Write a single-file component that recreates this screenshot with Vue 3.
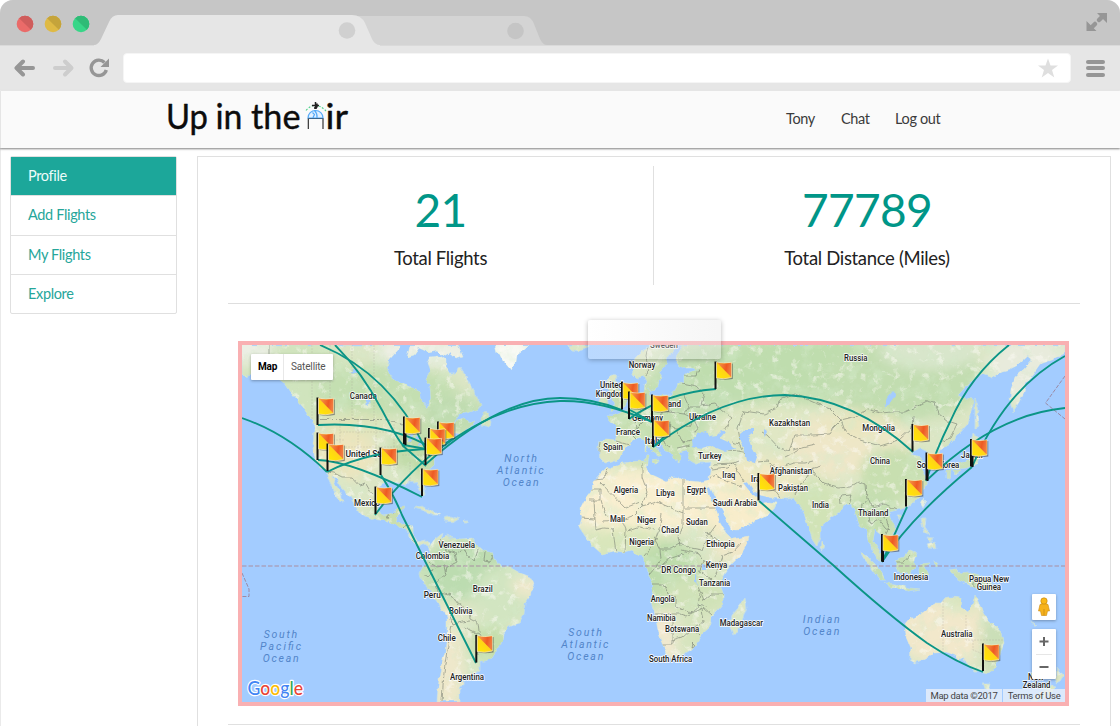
<script setup>
const tabs = [
  { d: 'M358 16H524Q531 16 534 24L540 39Q543 45 547 45H358Z', fill: '#d4d4d4', cx: 515.5, cy: 31 },
  { d: 'M94 45Q98 45 101 39L109 22Q112 15 118 15H352Q361 15 365 23L372 39Q375 45 380 45V46H94Z', fill: '#e6e6e6', cx: 347, cy: 30.5 }
]
const lights = [
  { x: 25, a: '#ea6b69', b: '#cf5d5c' },
  { x: 53, a: '#dfba45', b: '#c5a43b' },
  { x: 81, a: '#38d688', b: '#2fbb76' }
]
const nav = ['Tony', 'Chat', 'Log out']
const menu = ['Profile', 'Add Flights', 'My Flights', 'Explore']
const stats = [
  { value: '21', label: 'Total Flights' },
  { value: '77789', label: 'Total Distance (Miles)' }
]

const land = [
  // North and Central America
  '242,345 242,374 247,379 252,372 259,377 268,372 276,377 284,383 290,392 297,400 303,407 308,415 314,421 314,432 313,448 315,459 320,467 326,471 329,480 333,489 338,499 344,503 341,494 336,485 332,476 337,479 342,488 350,497 356,507 361,514 373,519 386,521 396,525 402,529 407,530 409,538 415,544 420,547 425,544 429,547 430,543 425,540 417,542 413,536 413,526 403,524 396,521 398,514 404,507 397,508 393,514 385,516 379,512 375,503 375,494 379,487 386,482 398,483 404,485 409,481 415,482 419,487 422,496 425,495 424,485 421,477 427,471 434,465 434,457 437,450 442,443 450,438 447,432 452,429 455,433 461,434 471,427 476,421 469,423 464,418 458,420 451,426 460,414 470,412 478,409 482,405 478,398 474,392 468,381 464,372 459,366 455,374 449,374 446,367 446,360 440,356 430,357 427,363 430,371 426,379 430,386 431,398 427,408 422,402 420,392 410,387 400,383 391,377 387,368 389,360 397,351 402,345',
  '410,345 458,345 463,357 456,359 449,353 444,356 437,350 428,352 419,348 414,355 407,357',
  // Newfoundland and the Caribbean
  '481,418 486,411 491,421 490,428 482,426', '413,508 421,506 431,510 440,515 432,515 422,510', '444,518 451,516 459,519 454,522 445,521', '464,520 468,520 468,522 464,522',
  // Greenland and Iceland
  '495,345 497,353 501,355 505,363 511,370 516,362 517,355 524,350 530,345', '567,345 572,350 580,351 588,347 589,345',
  // South America
  '429,547 434,540 439,536 443,533 441,540 446,535 452,538 461,539 472,538 477,545 484,551 492,553 496,563 503,567 511,568 520,573 531,577 535,584 530,595 525,602 524,614 519,623 509,627 503,634 502,641 498,648 492,658 485,661 480,661 480,671 473,675 463,677 463,684 459,689 459,701 437,701 438,688 441,666 445,652 447,634 447,616 440,607 433,597 427,586 421,581 419,574 423,567 428,561 429,552',
  // Great Britain and Ireland
  '606,380 611,375 617,376 616,383 619,389 624,397 627,402 624,408 616,409 610,412 614,405 612,399 613,394 608,391 609,385', '599,400 602,395 607,396 608,403 603,407 598,405',
  // Europe, Asia and Africa
  '650,345 642,351 635,358 632,366 633,375 637,379 643,376 647,383 650,391 656,390 658,382 663,378 659,372 666,364 668,356 674,350 677,345 683,345 678,354 677,363 683,368 693,368 699,370 689,372 684,376 684,383 678,382 676,390 670,395 663,395 656,397 650,395 648,387 650,383 645,384 644,394 639,398 632,403 627,410 621,413 613,416 607,416 611,421 616,424 619,432 616,441 606,440 599,441 598,449 600,458 605,463 612,462 620,459 623,452 628,445 634,440 641,438 645,440 650,448 656,452 658,458 662,455 657,449 650,441 652,437 659,442 665,449 672,453 675,460 679,463 681,457 680,452 687,450 690,453 688,459 694,463 703,463 711,462 710,470 709,480 700,482 690,481 683,480 678,477 671,477 667,482 657,477 650,474 647,469 648,461 640,461 623,463 612,468 607,467 600,474 593,482 592,491 584,501 580,509 582,518 579,527 585,536 593,546 602,554 613,551 625,552 632,550 638,555 645,557 645,566 648,574 653,583 653,593 651,603 655,615 658,630 662,643 666,654 672,658 684,655 692,650 698,640 702,634 710,627 710,618 717,611 723,604 723,593 720,585 723,576 729,567 740,556 747,544 749,536 740,538 732,539 726,533 720,524 717,512 711,499 707,488 710,487 715,497 723,511 731,529 737,530 750,524 762,518 773,511 777,503 769,502 763,503 757,498 750,492 743,483 748,482 754,491 760,495 773,498 787,499 794,498 800,505 804,513 808,526 812,538 817,546 820,537 820,527 829,519 839,512 844,505 851,504 856,514 860,525 866,529 868,540 872,549 878,560 882,562 882,554 877,547 873,540 875,529 880,533 885,540 894,534 895,526 890,519 889,512 897,510 908,507 918,498 924,490 927,481 923,472 919,464 924,460 918,456 912,455 914,451 920,448 926,451 929,458 931,467 937,468 941,462 938,455 940,450 950,443 959,434 968,424 973,409 973,399 962,398 958,395 969,383 983,373 993,377 1002,371 1010,369 1018,365 1028,356 1031,361 1024,369 1016,376 1011,389 1010,401 1013,412 1019,402 1024,392 1026,383 1033,374 1040,364 1052,360 1065,353 1065,345',
  // Madagascar, Sri Lanka, Mediterranean islands
  '745,598 747,607 743,618 738,631 733,634 730,627 732,614 739,606', '821,542 825,546 823,550 820,548', '645,446 647,446 647,451 645,452', '646,455 649,455 648,461 645,460', '652,461 658,460 656,464',
  // Japan, Sakhalin, Taiwan, Philippines
  '973,433 980,439 976,443 971,441', '974,446 980,454 977,464 966,468 955,469 961,463 970,459', '946,471 951,470 950,479 946,478', '952,470 960,470 956,475', '975,397 979,410 977,415 979,426 975,429 975,414', '923,499 926,502 923,508 921,504', '897,515 901,515 899,519', '921,518 926,518 925,528 930,535 924,532', '927,544 935,541 936,549 929,548', '927,537 933,538 930,542',
  // Indonesia and New Guinea
  '860,552 867,556 873,562 881,571 886,580 880,580 873,571 866,562', '885,583 896,584 909,588 921,589 908,591 890,587', '895,561 903,558 910,550 917,553 914,560 915,566 910,573 900,573', '920,564 930,563 924,567 928,575 923,575 920,579 919,570', '934,560 938,564 935,568', '949,570 957,569 961,573 969,572 982,576 990,581 998,592 988,588 981,590 973,587 964,582 957,578',
  // Australia, Tasmania, New Zealand
  '905,625 910,619 921,614 929,608 934,603 941,603 945,598 950,597 961,598 960,607 968,612 972,606 975,595 980,606 986,617 995,626 1002,633 1004,643 1000,655 995,668 988,673 979,671 974,671 968,664 963,661 965,657 959,661 956,655 947,652 934,653 924,659 915,663 910,660 911,648 906,636', '983,683 991,683 989,690 985,690', '1056,667 1060,672 1064,675 1060,681 1055,684 1057,677', '1051,685 1056,687 1047,696 1038,701 1031,701', '1031,621 1037,626 1034,626'
]
const lakes = [
  '692,440 698,433 706,431 710,437 716,436 722,430 725,432 720,438 729,442 735,449 724,451 712,446 701,449 693,447',
  '740,434 746,429 753,429 753,434 748,438 752,448 757,457 755,463 747,461 745,451 740,442',
  '402,431 409,428 415,431 406,433', '409,434 413,435 411,442 408,443', '415,435 421,438 417,440', '418,444 424,441 424,444 419,446',
  '365,397 371,402 367,405', '349,372 358,368 357,373', '883,409 887,398 894,390 895,396 888,405', '702,565 707,566 706,570 702,570', '764,430 767,432 764,437', '695,572 697,580 698,586 695,581'
]
const tints = [
  // x, y, rx, ry, colour
  [300, 390, 60, 48, '#d0e4bd'], [385, 390, 70, 26, '#c4dfb1'], [455, 415, 32, 22, '#c0dcb0'], [350, 425, 40, 12, '#e0e4b9'],
  [424, 450, 34, 26, '#c1dba9'], [345, 455, 32, 24, '#ece5be'], [395, 515, 22, 18, '#cadead'], [425, 352, 50, 14, '#eef0e6'], [248, 348, 26, 14, '#ecefe5'],
  [510, 357, 25, 20, '#f8faf5'], [465, 570, 45, 30, '#bcdcb0'], [505, 595, 30, 30, '#d2e5c1'], [525, 585, 12, 12, '#f1e8cc'], [448, 665, 14, 60, '#efe8cb'], [490, 645, 20, 20, '#c4deab'],
  [650, 430, 55, 50, '#c6dfb1'], [720, 385, 70, 45, '#c2deb3'], [620, 450, 24, 14, '#e0e6c0'], [800, 370, 110, 34, '#bfddae'], [905, 380, 80, 40, '#c2ddb0'], [930, 352, 50, 18, '#d8e6cb'], [1030, 370, 44, 35, '#e8ebdc'],
  [770, 425, 60, 22, '#e0e7c4'], [850, 445, 62, 34, '#efe7c8'], [860, 425, 40, 12, '#eae6c0'], [895, 475, 36, 28, '#c8dfb0'],
  [640, 500, 90, 32, '#f9efd0'], [735, 500, 38, 38, '#f8edcb'], [765, 477, 38, 20, '#f0e8c2'], [815, 510, 26, 32, '#d1e3b6'], [870, 520, 28, 30, '#c4deb0'],
  [625, 545, 46, 18, '#d9e6bb'], [668, 575, 34, 34, '#bedcac'], [735, 545, 22, 16, '#f2e8c9'], [695, 595, 35, 20, '#d0e2b7'], [663, 635, 16, 26, '#f3e9d0'], [693, 635, 16, 18, '#d5e4bd'],
  [945, 632, 48, 32, '#f2e8cb'], [995, 640, 15, 38, '#cbdfb8'], [963, 600, 18, 12, '#dbe6c0'], [905, 573, 38, 20, '#c3deb1'], [975, 580, 30, 14, '#c6deb5'], [960, 462, 22, 22, '#c8dfb9']
]
const borders = [
  'M320 419.5H384Q396 421 403 425L411 432M420 444L430 438 437 437 443 428 446 435',
  'M327 472L334 473 342 477 352 477 360 486 366 484 372 494 377 497',
  'M387 519L389 513 394 513M397 521L403 519M402 528L410 525M412 540L417 543',
  'M269 345V370L278 378 288 394',
  'M441 540L446 550 455 553 457 562 447 567 446 573M429 563L436 567 444 566 446 575 436 583 438 592 447 595 450 593 458 604 469 610 470 619 478 623 479 632M457 552L465 550 467 556 475 560 478 549M485 552L484 561 490 562 493 556M449 613L453 625 461 622 470 621M452 626L447 650 444 672 442 701M465 627L479 634 483 641 477 648 478 655M424 576L430 575 433 568',
  'M600 442L598 458M616 441L629 445M624 411L635 419 636 428 632 435 637 440M642 397L641 411 636 418M660 396L663 411 658 418 644 420M643 422L634 431M663 411L684 414 689 407 684 396M684 414L693 418 689 426 676 429 666 424 657 427M677 429L682 442 692 440M660 428L664 444 670 448M693 418L698 428 695 433M682 383L697 386 704 394 701 406 715 404 732 418 724 430M689 407L701 407M684 376L697 376 699 370M648 345L646 356 649 365 645 376M676 448L690 445',
  'M728 450L739 451 748 453M739 461L734 463 713 464M732 442L739 444 742 450M734 463L739 474 744 482M711 469L719 468 728 467 732 463M710 478L716 475 723 480 735 484 742 486M740 440L738 428 744 411 764 414 777 408 779 400 795 394 815 403 830 409 841 420 833 428 829 434 812 435 795 435 789 451 779 448 767 435 762 432M757 462L768 461 779 468 793 463 805 463 813 461M770 464L773 475 771 481 773 489 780 498M795 494L800 484 807 478 811 469 821 466M841 420L857 416 867 409 880 413 892 412 905 412 916 407 921 404 927 401 935 403 939 414 948 421 957 424 950 438 941 442M841 420L845 431 860 440 880 446 899 440 912 428 913 416M811 469L817 477 824 484 838 488 850 487 858 482 866 484 867 499 862 505 859 515M841 503L840 496 852 495 849 505M868 498L872 507 885 504 897 510M868 510L870 523 879 519 885 527 890 531M872 508L886 519 889 528 884 538M793 450L806 447 815 445M785 457L799 450',
  'M608 468L604 479 593 480M592 489H600V500H589M600 482L625 508 640 502M601 500L606 517M581 518L595 519 594 500M642 463V477L647 491 642 506 657 502 683 513V480M684 508H716M683 513V528L678 536 680 547M662 514L659 529 655 540 660 549 671 549 681 543 691 548 702 550 706 539 716 525M642 506L632 516 622 520 603 521M595 519L596 530 604 528 613 529 616 553M622 520L626 530 625 552M628 531L640 527 655 530M657 538L650 549 644 556M660 549L661 559 654 569 649 575M681 550L699 554 704 561 702 566 699 573M704 561L719 564 722 556 733 552 742 542M718 540L705 533M719 564L715 577M702 573L719 586M650 584H664L668 594 676 597V606L691 613 700 605M698 587L704 600 711 594 723 594M700 593L698 605 707 607M655 614H680L686 616M672 617V630 645H661M672 640L682 637 692 628 700 635M686 616L702 608 704 622 693 629M691 648L695 646 692 643ZM703 608L711 615M657 569L669 559 683 554',
  'M895 562L904 562 910 555M974 575V589'
]
const stateLines = ['M943 600V672M966 615V640H1004M973 640V650L998 660', 'M340 420V455M358 420V470M376 420V462M394 424V470M318 440H345M340 432H400M345 447H420M402 455H430M410 462V482M290 395L300 419M312 345V419M330 345V419M352 345V419M374 345V419']
const dashes = ['M242 573L249 589V596.5H242', 'M1065 376L1045.500 403L1065 419']
const routes = [
  'M242 418Q288 434 327 472', 'M320 345Q390 374 425 448', 'M335 345Q362 372 382 410T404 445L426 449', 'M318 425Q390 421 437 451',
  'M318 460Q352 461 422 497', 'M327 472Q372 449 438 449', 'M402 445L426 466', 'M375 515Q408 470 453 438', 'M381 475Q394 495 402 515L476 663',
  'M426 464Q500 398 560 398Q592 398 622 410', 'M438 450Q500 403 560 401Q602 400 652 422', 'M629 419Q665 393 716 389', 'M630 410L652 422',
  'M653 447Q722 395 785 395Q854 398 913 452', 'M653 447L665 436', 'M759 501L833 565Q888 615 927 643Q957 663 983 672',
  'M907 507L882 562Q910 518 972 467', 'M926 481Q936 450 950 422Q970 376 1009 345', 'M927 480Q994 415 1065 408', 'M972 467Q1006 388 1065 356'
]
const flags = [
  [317.5, 397.5], [317.5, 432.5], [327.5, 443.5], [404, 416.5], [438, 421.5], [429, 428], [425.5, 437.5], [380.500, 447.5], [422, 468.5], [375.5, 486.500],
  [622, 382], [629, 391.500], [652, 394.500], [653, 419.5], [715.5, 361.5], [758.500, 473], [912.500, 424], [926.500, 452.500], [971, 439], [906, 479], [882, 534], [983, 643.5], [476.300, 635]
]
const twinPoles = [[405.500, 419], [439.500, 423], [927.500, 455], [972.500, 441], [883, 536]]
const labels = [
  ['Canada', 349.7, 398.5, 27], ['United States', 345.5, 456.5, 51], ['Mexico', 354, 505.5, 26], ['Venezuela', 438.5, 548, 36.500], ['Colombia', 415.7, 559, 33.500], ['Peru', 423.7, 598, 17],
  ['Bolivia', 449, 613.5, 23.500], ['Brazil', 472.7, 591.500, 20], ['Chile', 437.7, 641, 18], ['Argentina', 450, 679.500, 34], ['Norway', 628.7, 368, 26.600], ['Sweden', 650, 348, 28],
  ['Russia', 844, 361, 23.400], ['United', 600, 388, 23], ['Kingdom', 595.7, 396.5, 30], ['Germany', 632, 420.5, 31], ['Poland', 656, 406.5, 25], ['Ukraine', 689, 420, 27],
  ['Kazakhstan', 769, 425.500, 41], ['Mongolia', 862.3, 431, 32.700], ['China', 870, 464, 20], ['France', 616, 434.500, 24], ['Spain', 603.3, 449.6, 19.500], ['Italy', 644.7, 444, 17],
  ['Turkey', 698, 459, 23.700], ['Iraq', 722.3, 478, 13], ['Iran', 750.7, 482, 15], ['Afghanistan', 769.7, 474, 42.300], ['Pakistan', 778, 490.5, 30], ['India', 812, 508, 17],
  ['Saudi Arabia', 712.7, 506, 44.300], ['Egypt', 686.7, 492.500, 19.400], ['Libya', 656, 496.300, 18.700], ['Algeria', 613.7, 493, 24.400], ['Mali', 610, 522, 15], ['Niger', 637, 522.500, 19],
  ['Chad', 661.3, 532.500, 17.700], ['Sudan', 686, 524.500, 21.700], ['Nigeria', 629.3, 544.500, 24.700], ['Ethiopia', 706.3, 547, 28.400], ['Kenya', 705.7, 568, 21.500], ['DR Congo', 661.3, 573.300, 34.700],
  ['Tanzania', 699, 585.500, 31.300], ['Angola', 650.7, 602, 24], ['Namibia', 647, 620.500, 28.700], ['Botswana', 665, 631.500, 34.300], ['Madagascar', 719.7, 626, 43.300], ['South Africa', 649, 661.500, 43.300],
  ['Thailand', 858, 516, 30.500], ['Japan', 961, 458, 21.700], ['South Korea', 916.7, 467.800, 42.600], ['Indonesia', 893.7, 579.8, 34.500], ['Papua New', 969, 581.500, 40], ['Guinea', 976.7, 590, 24.400],
  ['Australia', 941, 636.500, 31.500], ['New', 1028, 679.500, 16], ['Zealand', 1022.7, 688, 27.700]
]
const oceans = [
  ['North', 504.3, 461.500, 32.500], ['Atlantic', 496.7, 473.500, 47], ['Ocean', 502.7, 485.500, 36], ['South', 263.7, 638, 33.500], ['Pacific', 260, 650, 41], ['Ocean', 262.7, 662, 36],
  ['South', 568.3, 636.3, 33.500], ['Atlantic', 561.3, 648.3, 47], ['Ocean', 567.3, 660.300, 36], ['Indian', 802.7, 622.6, 37], ['Ocean', 803.3, 635, 36]
]
</script>

<template>
  <div class="window">
    <div class="chrome">
      <svg class="tabstrip" width="1120" height="46" viewBox="0 0 1120 46">
        <rect width="1120" height="45" fill="#c6c6c6" />
        <rect y="45" width="1120" height="1" fill="#dadada" />
        <g v-for="t in tabs" :key="t.cx">
          <path :d="t.d" :fill="t.fill" />
          <circle :cx="t.cx" :cy="t.cy" r="8.300" :fill="t.cx > 400 ? '#c5c5c5' : '#d0d0d0'" />
        </g>
        <g v-for="l in lights" :key="l.x" :transform="`translate(${l.x} 24)`">
          <circle r="8.300" :fill="l.a" />
          <path d="M-5.870 -5.870A8.300 8.300 0 0 1 5.870 5.870Z" :fill="l.b" />
        </g>
        <g fill="#969696" stroke="#969696">
          <path d="M1097 13h10v10z M1086.500 31v-10l10 10z" stroke="none" />
          <path d="M1099 20l4-4M1091 28l4-4" stroke-width="4.500" stroke-linecap="round" />
        </g>
      </svg>
      <div class="toolbar">
        <svg class="navicons" width="96" height="24" viewBox="0 0 96 24" fill="none" stroke-linecap="round" stroke-linejoin="round">
          <path d="M19 12H3M9 5.500L2.500 12L9 18.500" stroke="#969696" stroke-width="4" />
          <path d="M41 12H57M51 5.500L57.500 12L51 18.500" stroke="#cdcdcd" stroke-width="4" />
          <path d="M92.300 14A7.700 7.700 0 1 1 90.500 6.500" stroke="#969696" stroke-width="3.400" stroke-linecap="butt" />
          <path d="M95 2.500V11H86.500z" fill="#969696" />
        </svg>
        <div class="url">
          <svg width="22" height="20" viewBox="0 0 22 20"><path d="M11 .500L13.500 7.500H21L15 12L17.300 19.500L11 15L4.700 19.500L7 12L1 7.500H8.500Z" fill="#dfdfdf" /></svg>
        </div>
        <div class="burger"><i /><i /><i /></div>
      </div>
    </div>

    <header class="header">
      <svg class="logo" width="190" height="56" viewBox="163 91 190 56">
        <g class="logotext">
          <text x="166" y="129" textLength="42" lengthAdjust="spacingAndGlyphs">Up</text>
          <text x="215.500" y="129" textLength="27" lengthAdjust="spacingAndGlyphs">in</text>
          <text x="251" y="129" textLength="49.500" lengthAdjust="spacingAndGlyphs">the</text>
          <text x="325.500" y="129" textLength="22.500" lengthAdjust="spacingAndGlyphs">ir</text>
        </g>
        <path d="M308.300 129V118.500H323V129" fill="none" stroke="#222" stroke-width="1.100" />
        <path d="M308 118a7.500 7.500 0 0 1 15 0zM312.500 112.500l2 2-1.500 3M314.500 110.500q3 3 2.500 7" fill="#e4f1ff" stroke="#55aaf8" stroke-width="1.200" />
        <path d="M306 110.500Q315 100 326 111" fill="none" stroke="#4fd18b" stroke-width="1.100" stroke-dasharray="2 1.600" />
        <path d="M315.500 102V109M312 105.500H319M314 108H317M317 103.500V107.500" stroke="#222" stroke-width="1.500" />
      </svg>
      <nav class="nav"><span v-for="n in nav" :key="n">{{ n }}</span></nav>
    </header>

    <div class="body">
      <ul class="side">
        <li v-for="(m, i) in menu" :key="m" :class="{ active: i === 0 }">{{ m }}</li>
      </ul>
      <main class="card">
        <section class="stats">
          <div v-for="s in stats" :key="s.label" class="stat">
            <div class="value">{{ s.value }}</div>
            <div class="label">{{ s.label }}</div>
          </div>
        </section>
        <section class="map">
          <svg width="823" height="357" viewBox="242 345 823 357">
            <defs>
              <clipPath id="landclip"><polygon v-for="(p, i) in land" :key="i" :points="p" /></clipPath>
              <filter id="soft" x="-40%" y="-40%" width="180%" height="180%"><feGaussianBlur stdDeviation="6" /></filter>
              <filter id="coast" x="0" y="0" width="100%" height="100%">
                <feTurbulence type="fractalNoise" baseFrequency="0.160" numOctaves="2" seed="4" />
                <feDisplacementMap in="SourceGraphic" scale="4.500" xChannelSelector="R" yChannelSelector="G" />
              </filter>
              <filter id="forest" x="0" y="0" width="100%" height="100%">
                <feTurbulence type="fractalNoise" baseFrequency="0.060" numOctaves="4" seed="8" />
                <feColorMatrix values="0 0 0 0 .66  0 0 0 0 .83  0 0 0 0 .60  3.500 0 0 0 -1.750" />
              </filter>
              <filter id="bare" x="0" y="0" width="100%" height="100%">
                <feTurbulence type="fractalNoise" baseFrequency="0.110" numOctaves="4" seed="21" />
                <feColorMatrix values="0 0 0 0 .97  0 0 0 0 .96  0 0 0 0 .90  0 5 0 0 -2.850" />
              </filter>
              <linearGradient id="fy" x1="0" y1="1" x2="1" y2="0"><stop stop-color="#ffea00" /><stop offset=".6" stop-color="#ffcf1c" /></linearGradient>
              <linearGradient id="fr" x1="0" y1="0" x2="1" y2=".2"><stop stop-color="#f6a650" /><stop offset=".7" stop-color="#ee5a22" /><stop offset="1" stop-color="#f07a40" /></linearGradient>
              <g id="flag">
                <path d="M2 1.500Q9 3.500 17.300 2V17.500Q9 19 2 17.500Z" fill="#333" opacity=".5" />
                <path d="M0 0V27.500" stroke="#101010" stroke-width="2" />
                <path d="M1 .700Q8 2.500 16 .900V16Q8 18.300 1 16.500Z" fill="url(#fy)" stroke="#f6e4c4" stroke-width=".7" />
                <path d="M1.300 1Q8 2.700 15.700 1.200V15.500Z" fill="url(#fr)" />
              </g>
            </defs>
            <rect x="242" y="345" width="823" height="357" fill="#a3ccff" />
            <g filter="url(#coast)">
              <rect x="234" y="337" width="839" height="373" fill="#a3ccff" />
              <g stroke="#bfdcee" stroke-width="1" fill="#dce6c5" stroke-linejoin="round"><polygon v-for="(p, i) in land" :key="i" :points="p" /></g>
              <g clip-path="url(#landclip)">
                <g filter="url(#soft)"><ellipse v-for="(t, i) in tints" :key="i" :cx="t[0]" :cy="t[1]" :rx="t[2]" :ry="t[3]" :fill="t[4]" /></g>
                <rect x="242" y="345" width="823" height="357" filter="url(#forest)" opacity=".42" />
                <rect x="242" y="345" width="823" height="357" filter="url(#bare)" opacity=".5" />
                <path v-for="(b, i) in borders" :key="i" :d="b" fill="none" stroke="#757c70" stroke-width=".8" opacity=".72" stroke-linejoin="round" />
              </g>
              <g fill="#a3ccff"><polygon v-for="(p, i) in lakes" :key="i" :points="p" /></g>
            </g>
            <g clip-path="url(#landclip)"><path v-for="s in stateLines" :key="s" :d="s" fill="none" stroke="#a09c94" stroke-width=".6" opacity=".4" stroke-dasharray="2 1" /></g>
            <path d="M242 566H1065" stroke="#a98da2" stroke-width="1.200" stroke-dasharray="4.500 2" />
            <path v-for="d in dashes" :key="d" :d="d" fill="none" stroke="#9a829a" stroke-width=".9" stroke-dasharray="4 1.500" />
            <g class="place"><text v-for="l in labels" :key="l[0]" :x="l[1]" :y="l[2]" :textLength="l[3]" lengthAdjust="spacingAndGlyphs">{{ l[0] }}</text></g>
            <g class="ocean"><text v-for="(l, i) in oceans" :key="i" :x="l[1]" :y="l[2]" :textLength="l[3]">{{ l[0] }}</text></g>
            <g fill="none" stroke="#0b9586" stroke-width="1.850"><path v-for="r in routes" :key="r" :d="r" /></g>
            <path v-for="(p, i) in twinPoles" :key="i" :d="`M${p[0]} ${p[1]}v26`" stroke="#101010" stroke-width="2" />
            <use v-for="(f, i) in flags" :key="i" href="#flag" :x="f[0]" :y="f[1]" />
            <text class="google" x="247.500" y="695" textLength="55.500" lengthAdjust="spacingAndGlyphs"><tspan fill="#4285f4">G</tspan><tspan fill="#ea4335">o</tspan><tspan fill="#fbbc05">o</tspan><tspan fill="#4285f4">g</tspan><tspan fill="#34a853">l</tspan><tspan fill="#ea4335">e</tspan></text>
          </svg>
          <div class="maptype"><b>Map</b><span>Satellite</span></div>
          <div class="pegman">
            <svg width="12" height="20" viewBox="0 0 12 20"><path d="M2 7.500Q6 5 10 7.500L11.500 14H9.500L8.500 18.500H3.500L2.500 14H.500Z" fill="#f6b21b" stroke="#c98a14" stroke-width=".6" /><circle cx="6" cy="4" r="3.200" fill="#fbb917" stroke="#b87d10" stroke-width=".6" /><path d="M6 12V18.500" stroke="#c98a14" stroke-width=".8" /></svg>
          </div>
          <div class="zoomer">
            <svg width="24" height="50" viewBox="0 0 24 50"><path d="M7.500 12.500H16.500M12 8V17M7.500 38H16.500" stroke="#666" stroke-width="2" /><path d="M4 25.500H20" stroke="#e6e6e6" /></svg>
          </div>
          <div class="legal"><span>Map data ©2017</span><span>Terms of Use</span></div>
          <div class="ghost" />
        </section>
        <div class="endline" />
      </main>
    </div>
  </div>
</template>

<style>
body { margin: 0; background: #fff; overflow: hidden; }
</style>

<style scoped>
* { box-sizing: border-box; }
.window { width: 1120px; height: 726px; overflow: hidden; background: #fff; font-family: Lato, "Open Sans", sans-serif; display: flex; flex-direction: column; }
.chrome { height: 91px; background: #e6e6e6; border-bottom: 1px solid #eee; flex: none; border-radius: 13px 13px 0 0; overflow: hidden; }
.tabstrip { display: block; }
.toolbar { height: 44px; display: flex; align-items: center; padding: 0 15px 0 14px; }
.navicons { flex: none; margin-right: 13px; }
.url { width: 948px; height: 30px; background: #fff; border-radius: 4px; border: 1px solid #f5f5f5; display: flex; align-items: center; justify-content: flex-end; padding-right: 11px; }
.burger { margin-left: 15px; width: 19px; display: flex; flex-direction: column; gap: 2.500px; }
.burger i { height: 4px; border-radius: 2px; background: #969696; }
.header { flex: none; height: 57px; background: #fafafa; border-left: 1px solid #e5e5e5; display: flex; align-items: flex-start; box-shadow: 0 1px 2px rgba(0, 0, 0, .5); padding-left: 162px; position: relative; }
.logo { flex: none; overflow: visible; }
.logotext { font: 35px Lato, sans-serif; fill: #0c0c0c; stroke: #0c0c0c; stroke-width: .4px; stroke-linejoin: round; }
.nav { display: flex; gap: 26px; margin-left: 433px; font-size: 14.500px; letter-spacing: -.35px; line-height: 56px; color: #3b3b3b; }
.nav span:nth-child(1) { width: 29px; }
.nav span:nth-child(2) { width: 28px; }
.nav span { white-space: nowrap; }
.body { flex: 1; min-height: 0; display: flex; align-items: flex-start; padding: 8px 9px 0 9px; border-left: 1px solid #eaeaea; }
.side { list-style: none; margin: 0; padding: 0; width: 167px; border: 1px solid #e0e0e0; border-radius: 2px; }
.side li { height: 39.300px; line-height: 37.500px; padding-left: 17px; font-size: 14.500px; letter-spacing: -.35px; color: #26a69a; border-bottom: 1px solid #e0e0e0; }
.side li:last-child { border-bottom: 0; height: 38.500px; }
.side li.active { background: #1ca79a; color: #eefcfa; }
.card { width: 914px; height: 580px; margin-left: 20px; border: 1px solid #e0e0e0; border-bottom: 0; padding: 9px 30px 0; }
.stats { display: flex; height: 138px; border-bottom: 1px solid #dedede; }
.stat { width: 427px; height: 119px; text-align: center; }
.stat:first-child { width: 425px; }
.stat + .stat { border-left: 1px solid #e0e0e0; }
.value { height: 80px; line-height: 88px; font-size: 46px; letter-spacing: -.7px; color: #009688; }
.label { line-height: 24px; font-size: 18.500px; letter-spacing: -.33px; color: #222; }
.map { position: relative; width: 831px; height: 365px; margin: 37px 0 0 10px; border: 4px solid #f9b0b2; }
.map > svg { display: block; }
.place { font: 500 9px Roboto, sans-serif; fill: #222; stroke: #fff; stroke-opacity: .85; stroke-width: 1.800px; stroke-linejoin: round; paint-order: stroke; }
.ocean { font: italic 10.500px Roboto, sans-serif; fill: #5285c9; }
.google { font: 500 19px Lato, sans-serif; stroke: #fff; stroke-width: 2.500px; stroke-linejoin: round; paint-order: stroke; }
.maptype { position: absolute; left: 9px; top: 9px; height: 26px; width: 82px; display: flex; background: #fff; border-radius: 1px; box-shadow: 0 1px 3px rgba(0, 0, 0, .3); font: 10px/26px Roboto, sans-serif; letter-spacing: -.15px; color: #555; }
.maptype b { width: 33px; padding-left: 7px; color: #000; font-weight: 700; border-right: 1px solid #e8e8e8; }
.maptype span { padding-left: 7px; }
.pegman, .zoomer { position: absolute; left: 790px; width: 24px; background: #fff; border-radius: 1px; box-shadow: 0 1px 3px rgba(0, 0, 0, .3); }
.pegman { top: 249px; height: 26px; display: flex; align-items: center; justify-content: center; }
.zoomer { top: 284px; height: 50px; }
.legal { position: absolute; right: 0; bottom: 0; display: flex; gap: 1px; font: 9.500px/13px Roboto, sans-serif; letter-spacing: -.28px; color: #444; }
.legal span { background: rgba(236, 241, 250, .78); padding: 0 4.500px; white-space: nowrap; }
.ghost { position: absolute; left: 346px; top: -25px; width: 133px; height: 39px; border-radius: 2px; background: linear-gradient(90deg, rgba(255, 255, 255, .25), rgba(232, 232, 232, .4)); box-shadow: 0 1px 5px rgba(0, 0, 0, .28); }
.endline { height: 1px; background: #e0e0e0; margin-top: 18px; }
</style>
